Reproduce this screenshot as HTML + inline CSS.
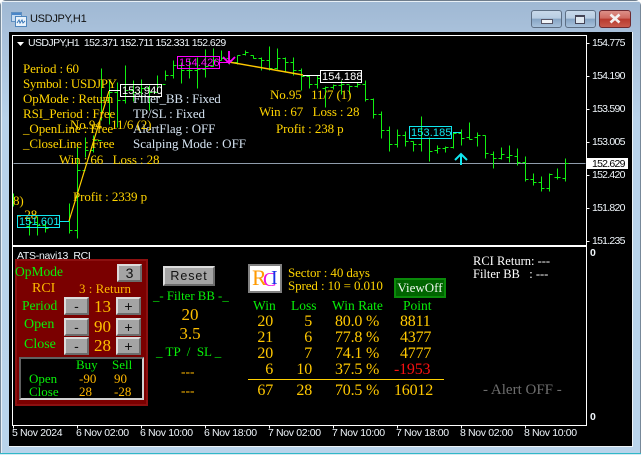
<!DOCTYPE html>
<html><head><meta charset="utf-8">
<style>
html,body{margin:0;padding:0;background:#fff}
#w{position:relative;width:641px;height:455px;overflow:hidden;background:linear-gradient(#9fb8d3 0,#a8c0da 30px,#b8d2ea 120px,#b9d4eb 100%);font-family:"Liberation Serif",serif;border-radius:6px 6px 0 0}
#w div,#w span.t{position:absolute;white-space:nowrap}
.t{position:absolute;white-space:nowrap;line-height:14px}
.s{font-size:13px;letter-spacing:-.1px}
.y{color:#ffd400}
.b{color:#d4e2f0}
.g{color:#08f008}
.o{color:#ffb800}
.w{color:#fff}
.a{font-family:"Liberation Sans",sans-serif;font-size:10.5px;color:#f0f6fb;letter-spacing:-.75px;line-height:12px}
.d{letter-spacing:-.35px}
.l{font-size:11px;line-height:14px;letter-spacing:.12px}
.btn{background:#a4a4a4;border:2px solid;border-color:#dcdcdc #6c6c6c #6c6c6c #dcdcdc;box-sizing:border-box;color:#111;font-family:"Liberation Sans",sans-serif;text-align:center}
.v{font-size:17px;line-height:18px;color:#ffc000;text-align:center}
.r{font-size:16px;line-height:16px;color:#ffc800;letter-spacing:-.2px}
</style></head><body>
<div id="w">
<!-- window frame -->
<div style="left:0;top:0;width:641px;height:1px;background:#6f7d8c"></div>
<div style="left:0;top:1px;width:641px;height:1px;background:#e8f0f6"></div>
<div style="left:0;top:0;width:1px;height:455px;background:#77899a"></div>
<div style="left:1px;top:1px;width:1px;height:454px;background:#e8f0f6"></div>
<div style="left:640px;top:0;width:1px;height:455px;background:#77899a"></div>
<div style="left:0;top:453px;width:641px;height:1px;background:#30b8c8"></div>
<div style="left:0;top:454px;width:641px;height:1px;background:#d8e8f0"></div>
<!-- title -->
<svg style="position:absolute;left:11px;top:12px" width="16" height="15" viewBox="0 0 16 15"><rect x=".5" y=".5" width="10" height="9" fill="#c6dcf2" stroke="#5f8fc0"/><rect x="4.5" y="4.5" width="11" height="10" fill="#eaf3fb" stroke="#4f86bd"/><rect x="1" y="1" width="9" height="2" fill="#4a86c8"/><path d="M6 11l2-3 1 3 2-3 1 3 2-2" fill="none" stroke="#3a78b8"/></svg>
<span class="t" style="left:30px;top:12px;font:11px/15px 'Liberation Sans',sans-serif;letter-spacing:-.3px;color:#111">USDJPY,H1</span>
<!-- window buttons -->
<div style="left:531px;top:10px;width:31px;height:18px;box-sizing:border-box;border:1px solid #5d6f84;border-radius:3px;background:linear-gradient(#c8d9ea 0,#b8cde2 45%,#86a4c4 50%,#a8c2dc 100%)"></div>
<div style="left:541px;top:19px;width:10px;height:3px;background:#f0f4f8;border:1px solid #556"></div>
<div style="left:565px;top:10px;width:31px;height:18px;box-sizing:border-box;border:1px solid #5d6f84;border-radius:3px;background:linear-gradient(#c8d9ea 0,#b8cde2 45%,#86a4c4 50%,#a8c2dc 100%)"></div>
<div style="left:575px;top:15px;width:8px;height:6px;border:1px solid #445;border-top-width:2px;background:#dfe8f0"></div>
<div style="left:599px;top:10px;width:32px;height:18px;box-sizing:border-box;border:1px solid #6e2a30;border-radius:3px;background:linear-gradient(#dc9088 0,#cf6a60 45%,#b83a2e 50%,#c85a4c 100%)"></div>
<svg style="position:absolute;left:609px;top:13px" width="12" height="11"><path d="M1.5 1.5L10.5 9.5M10.5 1.5L1.5 9.5" stroke="#f4f0f0" stroke-width="2.6"/></svg>

<!-- client -->
<div style="left:632px;top:32px;width:1px;height:415px;background:#eef4f8"></div>
<div style="left:9px;top:446px;width:624px;height:1px;background:#eef4f8"></div>
<div style="left:9px;top:32px;width:623px;height:414px;background:#000"></div>
<div style="left:12px;top:35px;width:573px;height:209px;border:1px solid #fff"></div>
<div style="left:12px;top:246px;width:573px;height:178px;border:1px solid #fff"></div>

<svg style="position:absolute;left:0;top:0" width="641" height="455" shape-rendering="crispEdges">
<g transform="translate(.5,.5)">
<path fill="none" stroke="#8f9cab" d="M13 163H585"/>
<path fill="none" stroke="#fff" d="M586 43H589M586 76H589M586 109H589M586 142H589M586 175H589M586 208H589M586 241H589M13 425V428M77 425V428M141 425V428M205 425V428M269 425V428M333 425V428M397 425V428M461 425V428M525 425V428"/>
<path fill="none" stroke="#10f010" d="
M13 193V206
M29 218V235M26 226H29M29 222H32
M37 216V235M34 222H37M37 225H40
M45 220V232M42 225H45M45 228H48
M69 203V233M69 230H72
M77 147V238M74 230H77M77 170H80
M85 137V157M82 170H85M85 150H88
M93 135V152M90 150H93M93 140H96
M101 68V120M98 140H101M101 100H104
M109 80V124M106 100H109M109 92H112
M117 82V127M114 92H117M117 100H120
M125 65V103M122 100H125M125 90H128
M133 80V101M130 90H133M133 92H136
M141 79V100M138 92H141M141 88H144
M149 85V110M146 88H149M149 92H152
M157 75V90M154 92H157M157 84H160
M165 70V80M162 84H165M165 75H168
M173 60V78M170 75H173M173 65H176
M181 62V83M178 65H181M181 70H184
M189 58V78M186 70H189M189 70H192
M197 57V88M194 70H197M197 69H200
M205 49V77M202 69H205M205 66H208
M213 48V66M210 66H213M213 60H216
M221 50V60M218 60H221M221 58H224
M229 55V64M226 58H229M229 60H232
M237 55V64M234 62H237M237 55H240
M245 50V55M242 54H245M245 52H248
M253 55V58M250 55H253M253 58H256
M261 57V70M258 58H261M261 60H264
M269 46V70M266 60H269M269 68H272
M277 48V69M274 68H277M277 58H280
M285 57V72M282 58H285M285 62H288
M293 57V75M290 62H293M293 70H296
M301 68V90M298 70H301M301 76H304
M309 75V88M306 76H309M309 84H312
M317 75V88M314 84H317M317 78H320
M325 86V107M322 88H325M325 87H328
M333 84V89M330 87H333M333 85H336
M341 80V94M338 85H341M341 84H344
M349 85V94M346 84H349M349 86H352
M357 82V87M354 86H357M357 84H360
M365 80V101M362 84H365M365 99H368
M373 98V118M370 99H373M373 114H376
M381 111V138M378 114H381M381 130H384
M389 126V151M386 130H389M389 144H392
M397 129V147M394 144H397M397 135H400
M405 131V146M402 135H405M405 141H408
M413 141V151M410 141H413M413 144H416
M421 116V151M418 144H421M421 138H424
M429 137V161M426 138H429M429 151H432
M437 145V153M434 150H437M437 148H440
M445 146V152M442 148H445M445 147H448
M453 132V148M450 147H453M453 133H456
M461 129V145M458 133H461M461 138H464
M469 122V139M466 137H469M469 139H472
M477 132V146M474 137H477M477 135H480
M485 135V158M482 135H485M485 153H488
M493 151V168M490 154H493M493 158H496
M501 147V159M498 158H501M501 154H504
M509 145V162M506 157H509M509 155H512
M517 148V165M514 156H517M517 162H520
M525 156V181M522 162H525M525 179H528
M533 173V185M530 179H533M533 182H536
M541 176V191M538 182H541M541 188H544
M549 173V191M546 188H549M549 174H552
M557 168V179M554 177H557M557 177H560
M565 158V181M562 178H565M565 163H568"/>
</g>
</svg>

<!-- price axis -->
<span class="t a" style="left:592px;top:37px">154.775</span>
<span class="t a" style="left:592px;top:70px">154.190</span>
<span class="t a" style="left:592px;top:103px">153.590</span>
<span class="t a" style="left:592px;top:136px">153.005</span>
<div style="left:587px;top:158px;width:41px;height:11px;background:#fff"></div>
<span class="t a" style="left:592px;top:158px;color:#000">152.629</span>
<span class="t a" style="left:592px;top:169px">152.420</span>
<span class="t a" style="left:592px;top:202px">151.820</span>
<span class="t a" style="left:592px;top:235px">151.235</span>
<span class="t a" style="left:590px;top:247px;font-weight:bold">0</span>
<span class="t a" style="left:590px;top:411px;font-weight:bold">0</span>
<!-- time axis -->
<span class="t a d" style="left:12px;top:427px">5 Nov 2024</span>
<span class="t a d" style="left:76px;top:427px">6 Nov 02:00</span>
<span class="t a d" style="left:140px;top:427px">6 Nov 10:00</span>
<span class="t a d" style="left:204px;top:427px">6 Nov 18:00</span>
<span class="t a d" style="left:268px;top:427px">7 Nov 02:00</span>
<span class="t a d" style="left:332px;top:427px">7 Nov 10:00</span>
<span class="t a d" style="left:396px;top:427px">7 Nov 18:00</span>
<span class="t a d" style="left:460px;top:427px">8 Nov 02:00</span>
<span class="t a d" style="left:524px;top:427px">8 Nov 10:00</span>

<!-- chart header -->
<svg style="position:absolute;left:17px;top:42px" width="8" height="5"><path d="M0 0H7L3.500 4Z" fill="#fff"/></svg>
<span class="t a" style="left:28px;top:37px;letter-spacing:-.58px">USDJPY,H1 &nbsp;152.371 152.711 152.331 152.629</span>

<!-- info text -->
<span class="t s y" style="left:23px;top:62px">Period : 60</span>
<span class="t s y" style="left:23px;top:77px;letter-spacing:-.3px">Symbol : USDJPY</span>
<span class="t s y" style="left:23px;top:92px">OpMode : Return</span>
<span class="t s y" style="left:23px;top:107px">RSI_Period : Free</span>
<span class="t s y" style="left:23px;top:122px">_OpenLine : Free</span>
<span class="t s y" style="left:23px;top:137px">_CloseLine : Free</span>
<span class="t s b" style="left:133px;top:92px;letter-spacing:-.25px">Filter_BB : Fixed</span>
<span class="t s b" style="left:133px;top:107px">TP/SL : Fixed</span>
<span class="t s b" style="left:133px;top:122px">AlertFlag : OFF</span>
<span class="t s b" style="left:133px;top:137px;letter-spacing:0">Scalping Mode : OFF</span>
<span class="t s y" style="left:70px;top:118px">No.94 &nbsp; 11/6 (2)</span>
<span class="t s y" style="left:59px;top:153px">Win : 66 &nbsp; Loss : 28</span>
<span class="t s y" style="left:73px;top:190px">Profit : 2339 p</span>
<span class="t s y" style="left:270px;top:88px">No.95 &nbsp; 11/7 (1)</span>
<span class="t s y" style="left:259px;top:105px">Win : 67 &nbsp; Loss : 28</span>
<span class="t s y" style="left:276px;top:122px">Profit : 238 p</span>
<span class="t s y" style="left:13px;top:194px;">8)</span>
<span class="t s y" style="left:17px;top:208px">- 28</span>

<!-- trend lines, arrows, labels -->
<svg style="position:absolute;left:0;top:0" width="641" height="455">
<path d="M69 221L109 91" stroke="#ffd000" fill="none" stroke-width="1.2"/>
<path d="M229 62L303 75" stroke="#ffc800" fill="none" stroke-width="1.4"/>
<path d="M109 90.500H120M303 75.500H320" stroke="#fff" fill="none" shape-rendering="crispEdges"/>
<path d="M220 62.500H229" stroke="#f0f" fill="none" shape-rendering="crispEdges"/>
<path d="M453 132.500H461M60 221.500H69" stroke="#10e8f0" fill="none" shape-rendering="crispEdges"/>
<path d="M229 51V63M223 57L229 63L235 57" stroke="#f0f" fill="none" stroke-width="1.8"/>
<path d="M461 165V154M455 160L461 154L467 160" stroke="#10e8f0" fill="none" stroke-width="2"/>
<g fill="none" shape-rendering="crispEdges">
<rect x="120.500" y="84.500" width="41" height="12" stroke="#fff"/>
<rect x="177.500" y="56.500" width="42" height="12" stroke="#f0f"/>
<rect x="320.500" y="70.500" width="41" height="12" stroke="#fff"/>
<rect x="409.500" y="126.500" width="42" height="12" stroke="#10e8f0"/>
<rect x="17.500" y="215.500" width="42" height="12" stroke="#10e8f0"/>
</g>
</svg>
<span class="t a l" style="left:122px;top:84px;color:#fff">153.940</span>
<span class="t a l" style="left:179px;top:56px;color:#f0f">154.426</span>
<span class="t a l" style="left:322px;top:70px;color:#fff">154.188</span>
<span class="t a l" style="left:411px;top:126px;color:#10e8f0">153.185</span>
<span class="t a l" style="left:19px;top:215px;color:#10e8f0">151.601</span>

<!-- indicator pane -->
<span class="t a" style="left:17px;top:250px;letter-spacing:-.3px">ATS-navi13 &nbsp;RCI</span>

<div style="left:15px;top:259px;width:133px;height:147px;box-sizing:border-box;background:#7a0000;border:2px solid #8c1010"></div>
<span class="t g" style="left:15px;top:264px;font-size:13.500px;line-height:16px">OpMode</span>
<div class="btn" style="left:117px;top:264px;width:25px;height:18px;font-size:14px;line-height:14px">3</div>
<span class="t o" style="left:32px;top:281px;font-size:14px;line-height:16px">RCI</span>
<span class="t o" style="left:79px;top:281px;font-size:13px;line-height:16px">3 : Return</span>
<span class="t g" style="left:22px;top:298px;font-size:13.500px;line-height:16px">Period</span>
<span class="t g" style="left:24px;top:317px;font-size:14px;line-height:16px">Open</span>
<span class="t g" style="left:24px;top:337px;font-size:14px;line-height:16px">Close</span>
<div class="btn" style="left:64px;top:297px;width:25px;height:18px;font-size:14px;line-height:14px">-</div>
<div class="btn" style="left:116px;top:297px;width:25px;height:18px;font-size:14px;line-height:14px">+</div>
<div class="btn" style="left:64px;top:318px;width:25px;height:18px;font-size:14px;line-height:14px">-</div>
<div class="btn" style="left:116px;top:318px;width:25px;height:18px;font-size:14px;line-height:14px">+</div>
<div class="btn" style="left:64px;top:337px;width:25px;height:18px;font-size:14px;line-height:14px">-</div>
<div class="btn" style="left:116px;top:337px;width:25px;height:18px;font-size:14px;line-height:14px">+</div>
<div class="v" style="left:89px;top:298px;width:27px">13</div>
<div class="v" style="left:89px;top:318px;width:27px">90</div>
<div class="v" style="left:89px;top:337px;width:27px">28</div>

<div style="left:19px;top:357px;width:125px;height:43px;box-sizing:border-box;background:#000;border:2px solid;border-color:#606060 #d0d0d0 #d0d0d0 #606060"></div>
<span class="t g" style="left:76px;top:358px;font-size:13px">Buy</span>
<span class="t g" style="left:112px;top:358px;font-size:13px">Sell</span>
<span class="t g" style="left:29px;top:372px;font-size:13px">Open</span>
<span class="t g" style="left:29px;top:385px;font-size:13px">Close</span>
<span class="t o" style="left:79px;top:372px;font-size:13px">-90</span>
<span class="t o" style="left:114px;top:372px;font-size:13px">90</span>
<span class="t o" style="left:79px;top:385px;font-size:13px">28</span>
<span class="t o" style="left:114px;top:385px;font-size:13px">-28</span>

<div class="btn" style="left:163px;top:266px;width:52px;height:20px;font-size:12.500px;letter-spacing:.9px;line-height:16px;color:#111">Reset</div>
<span class="t g" style="left:153px;top:289px;font-size:12.800px">_- Filter BB -_</span>
<div class="v" style="left:170px;top:306px;width:40px">20</div>
<div class="v" style="left:170px;top:325px;width:40px">3.5</div>
<span class="t g" style="left:156px;top:344px;font-size:13px;line-height:16px">_ TP &nbsp;/ &nbsp;SL _</span>
<span class="t o" style="left:181px;top:365px;font-size:13.500px">---</span>
<span class="t o" style="left:181px;top:384px;font-size:13.500px">---</span>

<!-- logo -->
<div style="left:248px;top:264px;width:34px;height:29px;box-sizing:border-box;background:#fff;border:2px solid #808080"></div>
<span class="t" style="left:252px;top:266px;font-size:22px;line-height:24px;color:#ff9a00">R</span>
<span class="t" style="left:263px;top:268px;font-size:20px;line-height:24px;color:#f010e0">C</span>
<span class="t" style="left:271px;top:266px;font-size:20px;line-height:24px;color:#1830e8">I</span>

<span class="t s y" style="left:288px;top:266px">Sector : 40 days</span>
<span class="t s y" style="left:288px;top:279px">Spred : 10 = 0.010</span>
<div style="left:394px;top:278px;width:52px;height:20px;box-sizing:border-box;background:#006400;border:2px solid #0a8a0a;color:#f0f8f0;font-size:13px;line-height:16px;text-align:center">ViewOff</div>

<span class="t g" style="left:253px;top:299px;font-size:13.500px">Win</span>
<span class="t g" style="left:291px;top:299px;font-size:13.500px">Loss</span>
<span class="t g" style="left:332px;top:299px;font-size:13.500px">Win Rate</span>
<span class="t g" style="left:403px;top:299px;font-size:13.500px">Point</span>

<div class="r" style="left:250px;top:314px;width:23px;text-align:right">20</div><div class="r" style="left:290px;top:314px;width:22px;text-align:right">5</div><span class="t r" style="left:335px;top:314px">80.0 %</span><span class="t r" style="left:400px;top:314px">8811</span>
<div class="r" style="left:250px;top:330px;width:23px;text-align:right">21</div><div class="r" style="left:290px;top:330px;width:22px;text-align:right">6</div><span class="t r" style="left:335px;top:330px">77.8 %</span><span class="t r" style="left:400px;top:330px">4377</span>
<div class="r" style="left:250px;top:346px;width:23px;text-align:right">20</div><div class="r" style="left:290px;top:346px;width:22px;text-align:right">7</div><span class="t r" style="left:335px;top:346px">74.1 %</span><span class="t r" style="left:400px;top:346px">4777</span>
<div class="r" style="left:250px;top:362px;width:23px;text-align:right">6</div><div class="r" style="left:290px;top:362px;width:22px;text-align:right">10</div><span class="t r" style="left:335px;top:362px">37.5 %</span><span class="t r" style="left:394px;top:362px;color:#f81010">-1953</span>
<div style="left:248px;top:379px;width:196px;height:1px;background:#ffd000"></div>
<div class="r" style="left:250px;top:383px;width:23px;text-align:right">67</div><div class="r" style="left:290px;top:383px;width:22px;text-align:right">28</div><span class="t r" style="left:335px;top:383px">70.5 %</span><span class="t r" style="left:394px;top:383px">16012</span>

<span class="t w" style="left:473px;top:254px;font-size:12.500px">RCI Return: ---</span>
<span class="t w" style="left:473px;top:267px;font-size:12.500px">Filter BB &nbsp; : ---</span>
<span class="t" style="left:483px;top:382px;font-size:15px;line-height:16px;color:#6e6e6e">- Alert OFF -</span>
</div>
</body></html>
